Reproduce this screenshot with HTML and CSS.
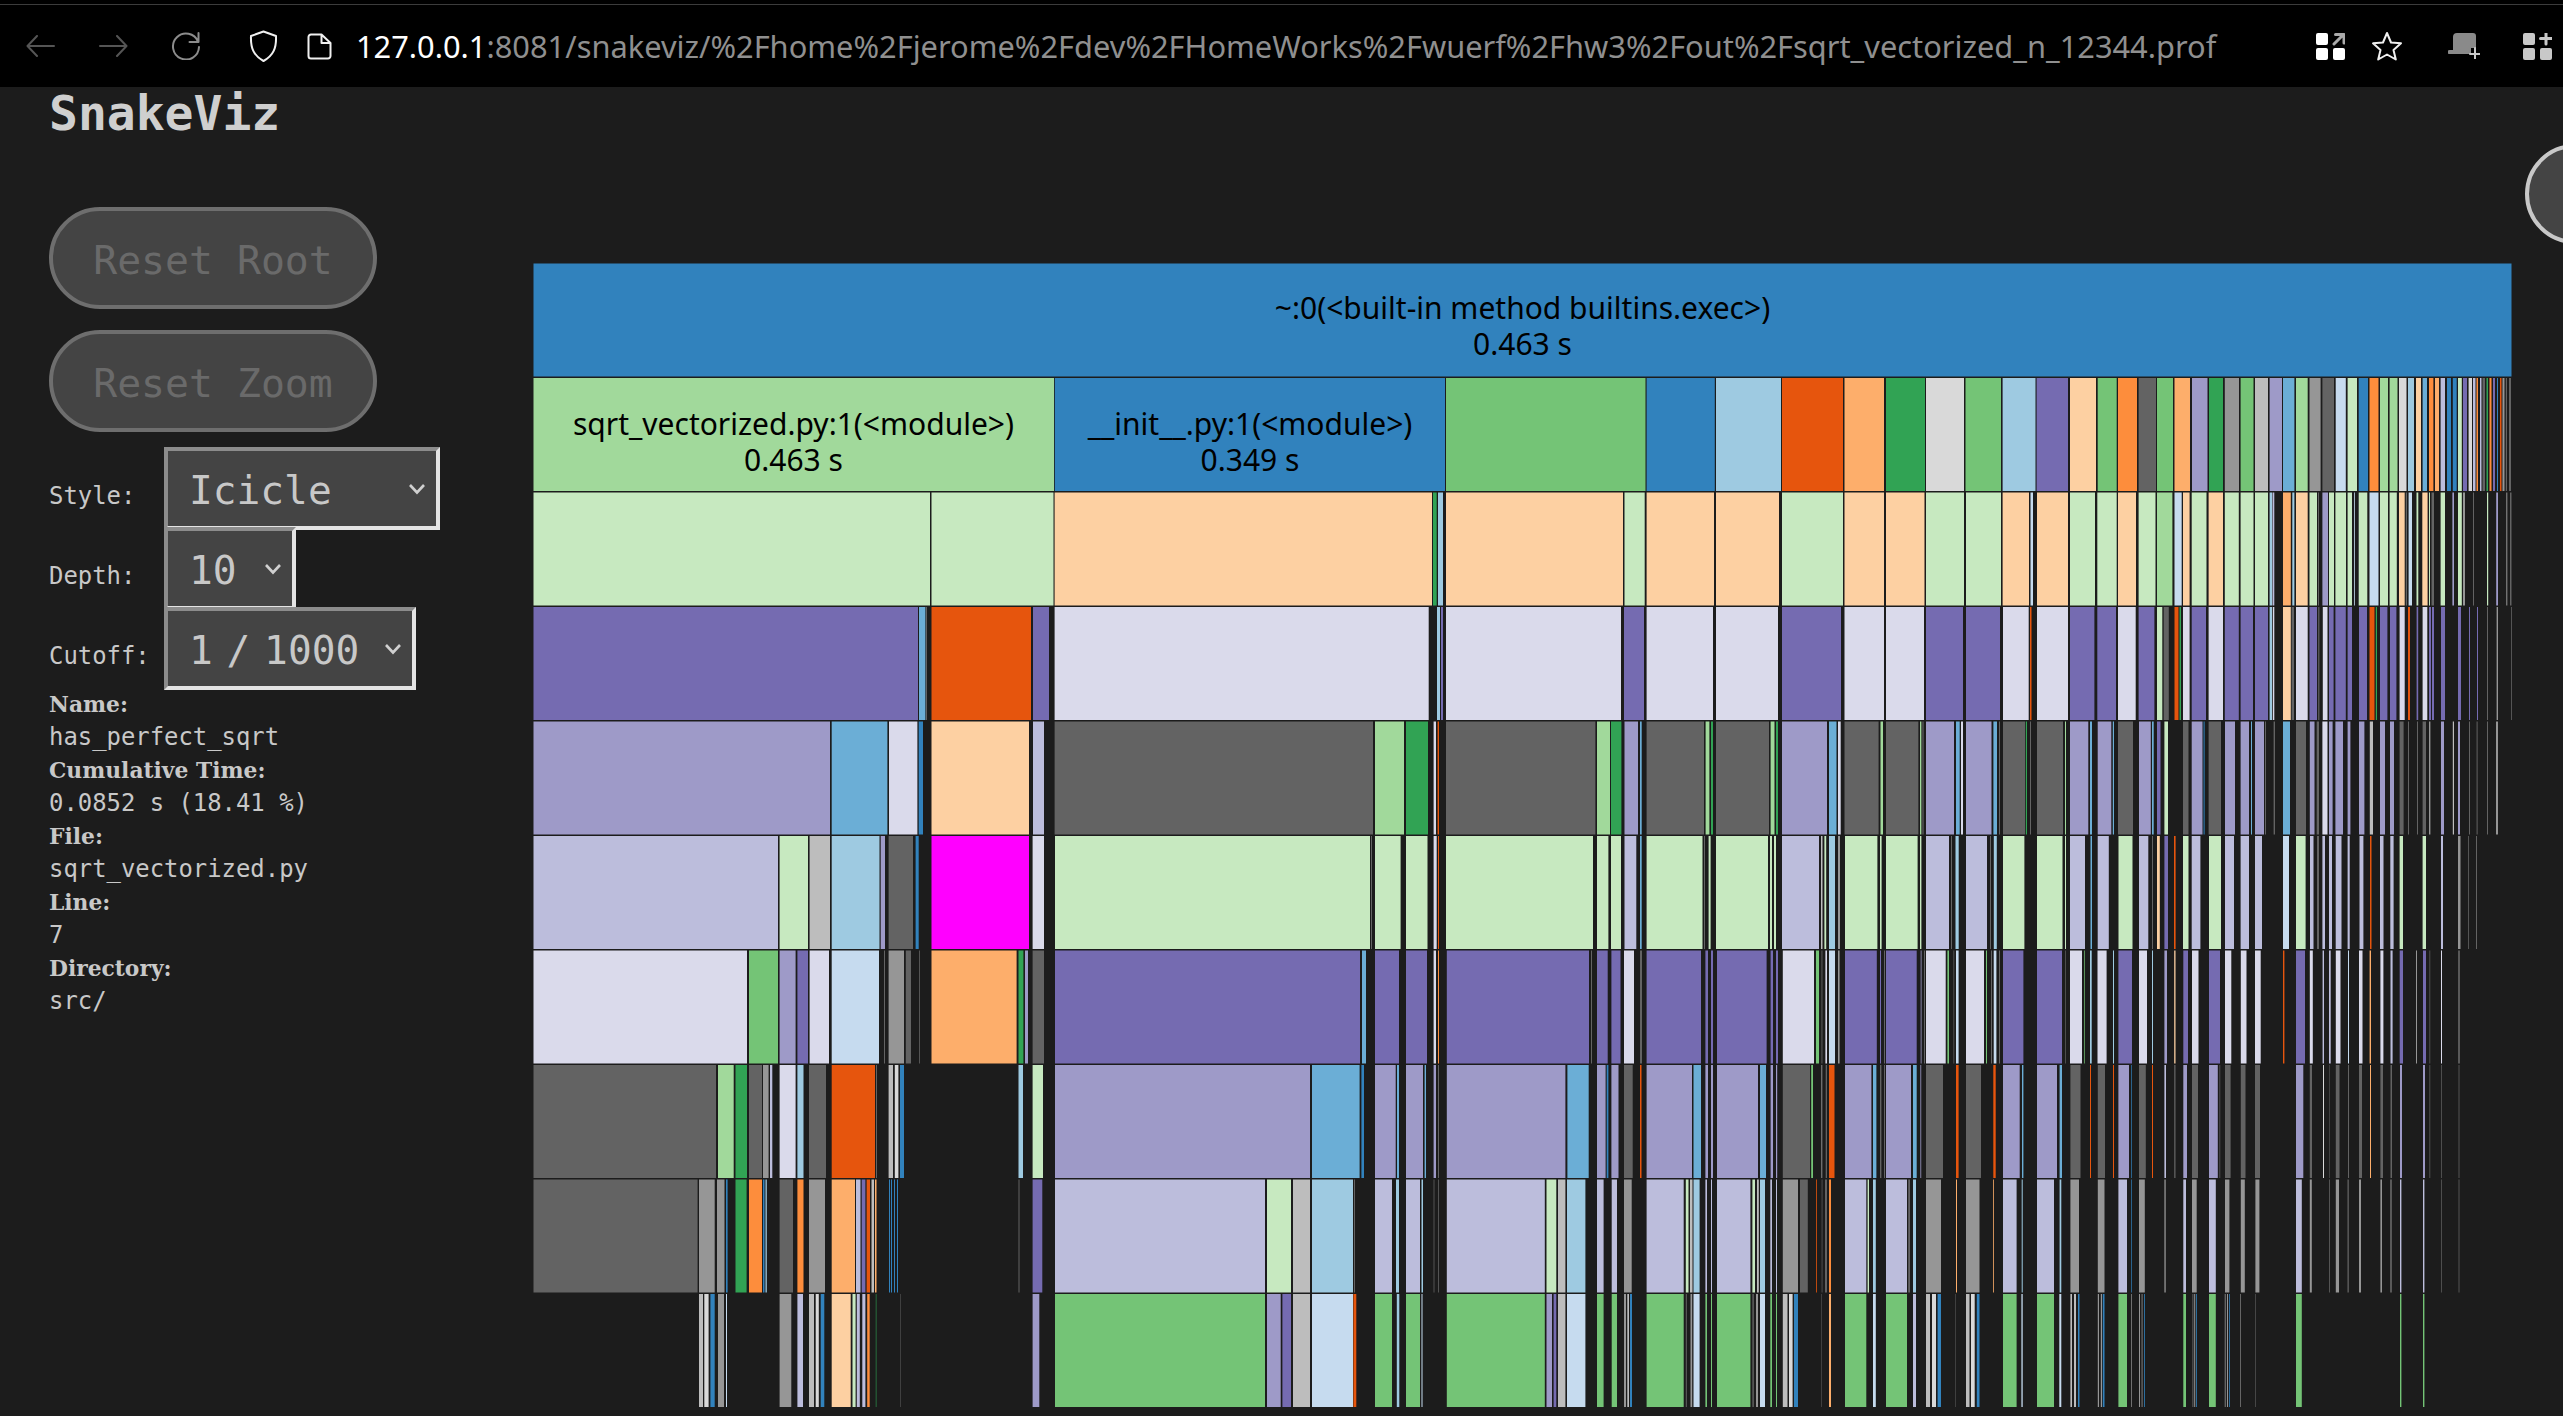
FILE: index.html
```html
<!DOCTYPE html>
<html lang="en">
<head>
<meta charset="UTF-8">
<meta name="viewport" content="width=device-width, initial-scale=1.0">
<title>SnakeViz</title>
<link rel="stylesheet" href="styles.css">
</head>
<body>
    <div class="browser">
        <div class="toolbar">
            <svg class="icon back" viewBox="0 0 29 22"><path d="M28 11H2M11 1 1.5 11 11 21"/></svg>
            <svg class="icon forward" viewBox="0 0 29 22"><path d="M1 11h26M18 1l9.5 10L18 21"/></svg>
            <svg class="icon reload" viewBox="0 0 30 28"><path d="M27 9.5A13 13 0 1 0 28 15M27.500 1v9h-9"/></svg>
            <svg class="icon shield" viewBox="0 0 29 32"><path d="M14.500 1.500 27 6c.5 12-2.500 19.500-12.500 25C4.500 25.500 1.500 18 2 6z"/></svg>
            <svg class="icon page" viewBox="0 0 25 27"><path d="M4 1.500h10.500L23.500 10v13a2.500 2.500 0 0 1-2.500 2.500H4A2.500 2.500 0 0 1 1.500 23V4A2.500 2.500 0 0 1 4 1.500zM14.500 1.500V10h9"/></svg>
            <div class="url"><span class="host">127.0.0.1</span>:8081/snakeviz/%2Fhome%2Fjerome%2Fdev%2FHomeWorks%2Fwuerf%2Fhw3%2Fout%2Fsqrt_vectorized_n_12344.prof</div>
            <svg class="icon ext" viewBox="0 0 29 27"><rect width="12" height="12" rx="2"/><rect y="15" width="12" height="12" rx="2"/><rect x="17" y="15" width="12" height="12" rx="2"/><path class="ext-arrow" d="M18 11 27 2M19.500 1.500H28V10"/></svg>
            <svg class="icon star" viewBox="0 0 32 30"><path d="M16 2l4 9.500 10 .8-7.500 6.700 2.300 9.500L16 23.500 7.200 28.500l2.300-9.500L2 12.300l10-.8z"/></svg>
            <svg class="icon tabs" viewBox="0 0 32 26"><path class="tabs-body" d="M9 0h16a3 3 0 0 1 3 3v12h-5v6H1.500a1.500 1.500 0 0 1 0-4H5V4a4 4 0 0 1 4-4z"/><path class="tabs-plus" d="M27 15v11M22 21h10"/></svg>
            <svg class="icon addon" viewBox="0 0 29 27"><rect width="12" height="12" rx="2"/><rect y="15" width="12" height="12" rx="2"/><rect x="17" y="15" width="12" height="12" rx="2"/><path d="M23 0v11M17.500 5.500h11" class="addon-plus"/></svg>
        </div>
    </div>

    <div class="main">
        <div class="sidebar">
            <h1 class="title">SnakeViz</h1>
            <button class="pill" disabled>Reset Root</button>
            <button class="pill" disabled>Reset Zoom</button>

            <div class="option">
                <label for="style">Style:</label>
                <select id="style" class="select select-style">
                    <option>Icicle</option>
                    <option>Sunburst</option>
                </select>
            </div>
            <div class="option">
                <label for="depth">Depth:</label>
                <select id="depth" class="select select-depth">
                    <option>10</option>
                    <option>5</option>
                    <option>3</option>
                </select>
            </div>
            <div class="option">
                <label for="cutoff">Cutoff:</label>
                <select id="cutoff" class="select select-cutoff">
                    <option>1 / 1000</option>
                    <option>1 / 100</option>
                </select>
            </div>

            <div class="info">
                <div class="info-label">Name:</div>
                <div>has_perfect_sqrt</div>
                <div class="info-label">Cumulative Time:</div>
                <div>0.0852 s (18.41 %)</div>
                <div class="info-label">File:</div>
                <div>sqrt_vectorized.py</div>
                <div class="info-label">Line:</div>
                <div>7</div>
                <div class="info-label">Directory:</div>
                <div>src/</div>
            </div>
        </div>

        <svg id="chart" class="chart" viewBox="533 263 1979 1153"></svg>
    </div>

    <button class="stats-pill" aria-label="Stats"></button>

    <script src="chart.js"></script>
</body>
</html>
```

FILE: styles.css
```css
html, body {
    margin: 0;
    height: 100%;
    overflow: hidden;
}
body {
    background-color: #1c1c1c;
    color: #c8c8c8;
    font-family: "DejaVu Sans Mono", monospace;
}

/* browser bar */
.browser {
    background-color: #000;
    padding-top: 4px;
}
.toolbar {
    display: flex;
    align-items: center;
    height: 82px;
    border-top: 1px solid #3c3c3c;
    padding: 0 11px 0 26px;
}
.icon {
    flex: none;
    fill: none;
    stroke-width: 2;
    stroke-linecap: round;
    stroke-linejoin: round;
}
.back, .forward {
    width: 29px;
    height: 22px;
    stroke: #555;
}
.forward { margin-left: 44px; }
.reload {
    width: 30px;
    height: 28px;
    margin-left: 43px;
    stroke: #8c8c8c;
}
.shield {
    width: 29px;
    height: 32px;
    margin-left: 48px;
    stroke: #f0f0f0;
}
.page {
    width: 25px;
    height: 27px;
    margin-left: 29px;
    stroke: #f0f0f0;
}
.url {
    flex: 1;
    margin-left: 24px;
    font-family: "Noto Sans", sans-serif;
    font-size: 30.800px;
    white-space: nowrap;
    color: #8f8f8f;
}
.host { color: #fff; }
.ext {
    width: 29px;
    height: 27px;
    fill: #fff;
    stroke: none;
}
.ext-arrow {
    fill: none;
    stroke: #aaa;
    stroke-width: 3;
}
.star {
    width: 32px;
    height: 30px;
    margin-left: 26px;
    stroke: #f0f0f0;
}
.tabs {
    width: 32px;
    height: 26px;
    margin-left: 45px;
    stroke: none;
}
.tabs-body { fill: #8a8a8a; }
.tabs-plus {
    stroke: #c8c8c8;
    stroke-width: 2;
}
.addon {
    width: 29px;
    height: 27px;
    margin-left: 43px;
    fill: #c8c8c8;
    stroke: none;
}
.addon-plus {
    fill: none;
    stroke: #c8c8c8;
    stroke-width: 3;
}

/* page */
.main {
    display: flex;
}
.sidebar {
    flex: none;
    width: 484px;
    padding-left: 49px;
}
.title {
    margin: 0 0 68px;
    font-size: 48px;
    line-height: 52px;
    font-weight: bold;
    color: #cfcfcf;
}
.pill {
    display: block;
    box-sizing: border-box;
    width: 328px;
    height: 102px;
    margin-bottom: 21px;
    border: 4px solid #6e6e6e;
    border-radius: 51px;
    background-color: #444;
    color: #6a6a6a;
    font-family: inherit;
    font-size: 39.800px;
    padding: 3px 0 0;
}
.pill + .pill { margin-bottom: 15px; }

.option {
    display: flex;
    align-items: baseline;
    height: 80px;
    font-size: 23.900px;
}
.option label {
    flex: none;
    width: 115px;
}
.select {
    flex: none;
    box-sizing: border-box;
    height: 83px;
    padding: 2px 0 0 21px;
    border-style: solid;
    border-width: 4px;
    border-color: #8c8c8c #e4e4e4 #e4e4e4 #8c8c8c;
    border-radius: 0;
    background-color: #444;
    color: #c8c8c8;
    font-family: inherit;
    font-size: 39.500px;
    appearance: none;
    background-image: url("data:image/svg+xml,%3Csvg xmlns='http://www.w3.org/2000/svg' width='18' height='12' viewBox='0 0 18 12'%3E%3Cpath d='M2 2l7 7.500L16 2' fill='none' stroke='%23d0d0d0' stroke-width='2.600'/%3E%3C/svg%3E");
    background-repeat: no-repeat;
    background-position: right 10px center;
}
.select-style { width: 276px; }
.select-depth { width: 132px; }
.select-cutoff {
    width: 252px;
    word-spacing: -10px;
}

.info {
    margin-top: 1px;
    font-size: 23.900px;
    line-height: 33px;
}
.info-label {
    font-family: "DejaVu Serif", serif;
    font-size: 21.800px;
    font-weight: bold;
}

/* chart */
.chart {
    flex: none;
    width: 1979px;
    height: 1153px;
    margin-top: 176px;
}
.chart-label {
    font-family: "Noto Sans", sans-serif;
    font-size: 30px;
    text-anchor: middle;
    fill: #000;
}
.fill-a { fill: #3182bd; }
.fill-b { fill: #6baed6; }
.fill-c { fill: #9ecae1; }
.fill-d { fill: #c6dbef; }
.fill-e { fill: #e6550d; }
.fill-f { fill: #fd8d3c; }
.fill-g { fill: #fdae6b; }
.fill-h { fill: #fdd0a2; }
.fill-i { fill: #31a354; }
.fill-j { fill: #74c476; }
.fill-k { fill: #a1d99b; }
.fill-l { fill: #c7e9c0; }
.fill-m { fill: #756bb1; }
.fill-n { fill: #9e9ac8; }
.fill-o { fill: #bcbddc; }
.fill-p { fill: #dadaeb; }
.fill-q { fill: #636363; }
.fill-r { fill: #969696; }
.fill-s { fill: #bdbdbd; }
.fill-t { fill: #d9d9d9; }
.fill-z { fill: #ff00ff; }

/* cut off by the window edge */
.stats-pill {
    position: absolute;
    left: 2525px;
    top: 144px;
    box-sizing: border-box;
    width: 120px;
    height: 100px;
    padding: 0;
    border: 4px solid #c8c8c8;
    border-radius: 50px;
    background-color: #444;
}
```

FILE: chart.js
```js
// each row is a list of start:end+colour, in page pixels
const ROW_TOP = 263.5;
const ROW_STEP = 114.5;
const ROW_HEIGHT = 113;

const rows = [
    "533.5:2511.5a",

    "533.5:1054k 1054.8:1445a 1446:1645.5j 1646.6:1714.8a 1716:1781c 1782:1843e 1844.5:1884g 1886:1925i 1926:1964t 1965.5:2001j " +
    "2002.6:2035.5c 2036.6:2068m 2070:2096h 2097.7:2116.7j 2118:2137f 2138.6:2156q 2157:2173j 2174.5:2190g 2192:2207.5n 2209:2223i " +
    "2224.8:2239r 2240.6:2253.5j 2255:2268s 2269.6:2282n 2283:2294.4b 2296:2307.7k 2309.5:2320.6r 2322.4:2334q 2335.7:2345.8d " +
    "2347.6:2357l 2358.7:2368a 2369.5:2378.5f 2380:2388k 2389.6:2397.5k 2399:2406.5t 2408:2414c 2416:2421h 2422.6:2427b 2429:2433.4f " +
    "2435:2439g 2440.6:2445o 2447:2451a 2452.8:2456.7a 2458:2461.8l 2463:2467m 2468.6:2472t 2473:2475.5o 2476.5:2478f 2480:2481.5o " +
    "2482.5:2485q 2486.5:2488i 2489.5:2491.5f 2493:2495m 2497:2498a 2500:2501.5e 2502.5:2504.5r 2505.8:2507q 2509:2511q",

    "533.5:930l 931.5:1053.5l 1054.6:1432h 1433:1436.7i 1438:1443c 1446:1623h 1624.5:1644.7l 1646.6:1714h 1716:1779h 1782:1843l " +
    "1844.5:1884h 1886:1924.5h 1926:1964l 1966:2001l 2002.6:2029h 2030.5:2033d 2037:2068h 2070:2095l 2097.3:2116.7l 2118:2136h " +
    "2138.6:2155.5l 2157:2172.4k 2174.5:2181.7d 2183:2189.6h 2191.7:2206.5l 2208.6:2223h 2224.8:2238.8l 2240.6:2253.5l 2255:2268l " +
    "2269.6:2272c 2272.5:2274.3o 2283:2290.8g 2292.3:2294.4c 2296:2307.7h 2309.5:2317l 2318:2319q 2322.4:2328n 2329:2334l 2335.4:2346l " +
    "2347.6:2352l 2354:2354.8d 2358.7:2367.3l 2369.5:2378.5d 2380:2388l 2389.6:2396.8l 2399:2404.7h 2405.8:2407q 2408.6:2412d " +
    "2416.5:2418.3l 2422.3:2427.6h 2429:2430l 2431.5:2434q 2440.6:2445l 2452.4:2454n 2458:2461.8l 2463:2465r 2473:2474q " +
    "2487:2488.2l 2496.2:2498n 2506.3:2507.3r 2510:2511.5q",

    "533.5:918m 919:925.4b 926:927q 931.5:1031e 1033:1049m 1054.6:1428.7p 1437:1440c 1441:1443m 1446:1621p 1624:1644m 1646.6:1713p " +
    "1716:1778p 1782:1841m 1844.5:1884p 1886:1924p 1926:1963m 1966:2000m 2003:2028.7p 2030:2031.5e 2037:2068p 2070:2094.4m " +
    "2097.3:2116m 2118:2135.7p 2138.6:2154.4m 2157:2162.3l 2163.7:2168.8q 2174.5:2178.5e 2179.5:2181i 2183:2189.6p 2191.7:2206m " +
    "2208.6:2223p 2224.8:2238.8m 2240.6:2253m 2255:2268m 2269.6:2272c 2272.8:2274.3p 2283:2290.8h 2291.6:2294q 2296:2307.7p " +
    "2309.5:2317m 2318.2:2319.4q 2322.8:2327.5p 2329:2333.6m 2335.4:2345.8m 2347.6:2352m 2359:2367m 2369.5:2374.5e 2375.8:2377i " +
    "2380:2387.4m 2390:2396.4m 2399.6:2404.7p 2408:2410e 2416.6:2418.2m 2422.6:2427.3p 2429:2431m 2432:2434m 2441:2445m 2458:2461m " +
    "2469:2470m 2477:2478m 2487:2488q 2496.6:2498r 2511:2511.8q",

    "533.5:830n 831.7:887.4b 889:917.4p 918.7:923a 931.5:1029h 1033:1044o 1054.6:1373q 1375:1404k 1406:1428i 1433.6:1436p 1437.6:1439e " +
    "1446:1595.4q 1597:1610k 1611:1621.4i 1624.5:1638n 1640:1641.7b 1646.6:1704q 1705.6:1709.4k 1711:1713i 1716:1769q 1770.6:1774.5k " +
    "1776:1778i 1782:1827n 1829:1836.5b 1838:1840.7p 1844.5:1878.6q 1880.5:1883k 1886:1918.4q 1920:1921.4k 1922.4:1923.6q 1926:1954n " +
    "1956:1959.7b 1961:1963p 1966:1991.5n 1993.4:1997b 1999:2000q 2003:2025q 2025.8:2027i 2030:2031q 2037:2063q 2065:2066k 2070:2088.3n " +
    "2090:2092b 2097.7:2111.3n 2112.8:2114b 2118:2133q 2139:2150.8n 2152:2153.7b 2157:2160.5m 2164.4:2168l 2183:2188.5q 2191.7:2202.5n " +
    "2203.6:2204.6a 2208.6:2221q 2225:2235n 2240.6:2249n 2251:2252b 2255:2264n 2265:2266q 2273.6:2275q 2283:2290b 2296:2306q 2309.8:2314.5n " +
    "2316.7:2319q 2322.4:2327.5p 2329:2332.6n 2335.4:2343n 2347.6:2350.4n 2359:2364.4n 2369.8:2373s 2380:2385n 2390:2394n 2399.6:2403.6q " +
    "2408:2409q 2417:2418q 2422.6:2426q 2429:2430.4r 2441:2444n 2452.8:2454s 2458:2460n 2469:2470q 2476.6:2477.6q 2487:2488q 2496:2498r",

    "533.5:778o 779.6:808l 809.6:830s 831.7:879.5c 880.7:885n 888.6:913q 915.6:918.7a 931.5:1029z 1032.6:1044p 1055:1370l 1371:1372q " +
    "1375:1400.6l 1406:1427.5l 1433.6:1436.7p 1438:1439e 1446:1593l 1597:1608.4l 1611:1621l 1624.5:1636.3o 1640:1641.7b 1646.6:1702.5l " +
    "1704:1705q 1708.6:1710.6l 1716:1768l 1770:1772l 1774:1776l 1782:1819o 1821:1822.5s 1824.4:1826.2l 1829:1835c 1838:1840r 1845:1877.4l " +
    "1880:1881.6l 1886:1917.6l 1920:1921.4l 1926:1949o 1951:1952q 1955.5:1958.7c 1966:1987o 1990:1991q 1993.8:1996.8c 2003:2024.4l " +
    "2037:2062.5l 2065:2066l 2070:2085o 2090.5:2092b 2097.7:2108.8o 2118.5:2132.5l 2139:2148.3o 2152:2153q 2157:2159.8h 2164.4:2168m " +
    "2174:2175.6e 2183:2188.5l 2191.7:2200.4o 2209:2221l 2225:2234o 2240.6:2249o 2255:2262o 2283:2289d 2296:2305.6l 2310:2313.5o " +
    "2317:2319q 2322.4:2325o 2329:2332o 2335.7:2341.5o 2347.6:2349.7o 2359.5:2363.4o 2370:2371.5e 2380:2383.5o 2390.3:2393.6o " +
    "2399.6:2403l 2422.6:2426l 2441:2443o 2458:2460.5r 2468:2468.8q 2476:2477q",

    "533.5:747p 749:778j 779.6:795.6n 797.4:808m 809.6:829p 831.7:879d 884:885q 888.6:904r 905.8:911q 919:919.8q 931.5:1016.6g 1018.5:1023.4i " +
    "1025:1028n 1032.6:1044q 1055:1360m 1362:1366b 1375:1399m 1406:1427m 1433.6:1436p 1438:1439f 1446.8:1589m 1591:1592q 1597:1607.7m " +
    "1611.4:1620.5m 1624:1634p 1640:1642q 1646.6:1701m 1705.4:1708m 1711:1713m 1717:1766.6m 1770.6:1773m 1776:1778m 1782.8:1814p 1816:1819j " +
    "1821.5:1822.4q 1825.4:1827p 1829:1835d 1838:1839.6r 1845:1876.8m 1880:1881m 1884:1885q 1886:1916.7m 1920.7:1921.5n 1924:1925q " +
    "1926:1945.7p 1947.4:1949j 1953.5:1954.2q 1956:1958.6d 1966:1984p 1986:1987j 1991:1992q 1993.7:1996.4d 1999:2000q 2003:2023.4m " +
    "2037:2062m 2065.3:2066q 2070:2082p 2084.3:2085j 2090:2091.7c 2097.5:2106.6p 2113:2114c 2118.4:2132m 2139:2147p 2152:2153c 2164.4:2167n " +
    "2174.2:2175.5h 2183.3:2188m 2192:2198.5p 2209:2220m 2225:2231.3p 2240.8:2246.5p 2255:2260.7p 2283:2284.4e 2296:2305m 2309.8:2312.8p " +
    "2322.6:2324o 2329:2330.7o 2335.8:2340.5p 2348:2349d 2359:2362.5p 2369.6:2371g 2380.4:2383.4p 2390.5:2392.6o 2399.7:2403m 2416:2417r " +
    "2423:2426m 2429.5:2430.2q 2441:2442p 2458.5:2459.5r",

    "533.5:716q 718:733.7k 735.5:747i 749:762q 763:768.6r 770:772.3o 779.6:795.6p 797.4:803.5c 809:826q 831.7:875e 876:877q 888.6:893s " +
    "894.8:898.4t 900:904a 1018.5:1023c 1032.6:1043l 1055:1310n 1312:1359.6b 1361.4:1364a 1375:1395.7n 1397:1399b 1406:1423n 1424.6:1426b " +
    "1433.6:1436n 1438:1439q 1446.8:1565.4n 1567.4:1588.7b 1597:1605.6n 1606.7:1608.4a 1611.4:1618.5n 1624:1632.7q 1640:1641.5e 1646.6:1692n " +
    "1693.5:1701b 1705.4:1708n 1711:1713n 1717:1758n 1760:1766b 1770.6:1773n 1776:1777.2n 1782.8:1810q 1811.2:1813j 1821.5:1822.2s 1825.7:1827q " +
    "1829:1834.5e 1845:1871.4n 1873:1876.4b 1880:1881.4q 1884:1885q 1886:1911n 1913:1916.7b 1920.4:1921.2n 1926:1943q 1956:1958.6e 1966:1981q " +
    "1993.3:1995.7e 2003:2019.7n 2022:2023.4b 2037:2057n 2059.6:2062b 2070.4:2080.5q 2090:2091e 2097.8:2105q 2113:2114e 2118.4:2129n 2131.3:2132a " +
    "2139:2145.8q 2152:2153e 2164.4:2166o 2174.2:2175.5q 2183.3:2187n 2192:2198q 2209:2217.8n 2219.5:2220.2q 2225:2230.6q 2240.8:2245.5q 2255:2260q " +
    "2296:2303.3n 2309.8:2312q 2323:2324t 2329.5:2330q 2335.8:2339.5q 2348:2349q 2359:2362q 2370:2371g 2380.4:2383q 2390.5:2392q 2400:2402n " +
    "2423:2425n 2429.5:2430.2q 2441.3:2442q 2458.6:2459.4q",

    "533.5:697.6q 699:714.7r 717:724.5r 726:727.6a 735.5:746.6i 749:762f 763:764.5a 765.5:766.8c 779.6:793q 797.4:803.5f 809:825r 831.7:855g 856:860.5o " +
    "861.7:865.4m 866.6:870e 871.5:874s 875:876.5g 889:890a 891:892a 894:895a 897:898a 1018.5:1019.5q 1032.6:1042.3m 1055:1265o 1267:1291l 1293:1310s " +
    "1312:1353c 1354:1355q 1375:1392o 1396:1399c 1406:1420o 1421.5:1423c 1433.6:1434.4q 1438:1438.8q 1446.8:1544.8o 1546.5:1556.3l 1558:1565.4s " +
    "1567:1585.4c 1597:1603.6o 1611.7:1617o 1624:1631.7r 1646.6:1683.7o 1685.8:1688.5l 1690:1692.5s 1693.5:1699.6c 1705.4:1707o 1711:1712o 1717:1750.4o " +
    "1752.4:1755l 1757:1758.8s 1760:1765c 1770.3:1772o 1776:1777o 1782.8:1798r 1800:1807.8q 1816:1816.8e 1821.7:1822.4q 1825:1827q 1829:1831f 1845:1866.3o " +
    "1867.6:1869l 1873:1875.8c 1886:1907o 1908.2:1910q 1913:1916c 1926:1941r 1956:1957g 1966:1979.5r 1993:1993.8g 2003:2016.6o 2021.7:2022.7c 2037:2054o " +
    "2059.6:2061.3c 2070.4:2079r 2097.8:2104.5r 2118.4:2127o 2131.3:2132a 2139:2144.8r 2164.4:2165.7r 2183.3:2186o 2192:2196.7r 2209:2215.8o 2225:2229.4r " +
    "2240.8:2244.8r 2255.4:2259.4r 2296:2301.8o 2309.8:2311.8r 2329:2329.8q 2335.8:2339r 2347.5:2348.8q 2359:2361r 2380.4:2382r 2390.5:2391.5r " +
    "2400:2401.4o 2423:2424.4o 2441.3:2442q 2458.6:2459.4q",

    "699:703s 704.3:708.6t 710.4:714.7a 718:724r 726:727d 779.6:791.3r 797.4:803o 809:814s 815.7:818.8t 820.7:824.3a 831.7:850.7h 852.5:855.6l 856.8:859.8o " +
    "862.3:865.4o 867.2:869.7f 875.8:876.4i 900.3:900.8q 1032.6:1039.3n 1055:1265j 1267:1280.7n 1282.4:1291m 1293:1310s 1312:1353d 1353.4:1356.3e " +
    "1375:1392j 1396.8:1399.3c 1406:1420j 1421.5:1422.5d 1446.8:1544.8j 1546.5:1552n 1553.6:1556.3m 1558:1565.4s 1567:1585.4d 1597:1603.6j 1611.7:1617j " +
    "1624:1626r 1627.3:1629s 1630:1632a 1646.6:1683.7j 1685.8:1686.8q 1690.5:1692.2r 1693.5:1699.6d 1705.4:1707j 1711:1712j 1717:1750.4j 1752.4:1753.8q " +
    "1756:1758r 1760:1765d 1770.3:1772j 1776:1777j 1782.8:1787.5s 1789:1792.6t 1794:1798a 1821.5:1822q 1829:1831g 1845:1866.3j 1873:1875.8d 1886:1907j " +
    "1913:1916o 1926:1930s 1932:1936t 1937.6:1941a 1955.5:1956q 1966:1969.5s 1971:1974.7t 1976.8:1979.5a 2003:2016.6j 2021.4:2022.7d 2037:2054j 2059.3:2061.3d " +
    "2070.4:2072s 2074:2076s 2078:2079.5a 2097.8:2099r 2100.8:2102r 2102.8:2104.5a 2118.4:2127j 2131.3:2132r 2139:2140r 2141.4:2142.8q 2144:2144.8a " +
    "2183.3:2186j 2192.4:2193.4q 2194.2:2195.2r 2196.2:2197a 2209:2215.8j 2224.6:2226q 2227:2228r 2229:2229.8a 2240.4:2241r 2255.4:2256q 2296:2301.8j " +
    "2400:2401.4j 2423:2424.4j"
];

const labels = [
    { x: 1522.5, y: 318.5, lines: ["~:0(<built-in method builtins.exec>)", "0.463 s"] },
    { x: 793.5, y: 435, lines: ["sqrt_vectorized.py:1(<module>)", "0.463 s"] },
    { x: 1250, y: 435, lines: ["__init__.py:1(<module>)", "0.349 s"] }
];

const SVG_NS = "http://www.w3.org/2000/svg";
const chart = document.getElementById("chart");

rows.forEach((row, i) => {
    const y = ROW_TOP + i * ROW_STEP;
    for (const m of row.matchAll(/([\d.]+):([\d.]+)([a-z])/g)) {
        const rect = document.createElementNS(SVG_NS, "rect");
        rect.setAttribute("x", m[1]);
        rect.setAttribute("y", y);
        rect.setAttribute("width", (m[2] - m[1]).toFixed(1));
        rect.setAttribute("height", ROW_HEIGHT);
        rect.setAttribute("class", "fill-" + m[3]);
        chart.appendChild(rect);
    }
});

labels.forEach(label => {
    label.lines.forEach((line, i) => {
        const text = document.createElementNS(SVG_NS, "text");
        text.setAttribute("x", label.x);
        text.setAttribute("y", label.y + i * 36);
        text.setAttribute("class", "chart-label");
        text.textContent = line;
        chart.appendChild(text);
    });
});
```
